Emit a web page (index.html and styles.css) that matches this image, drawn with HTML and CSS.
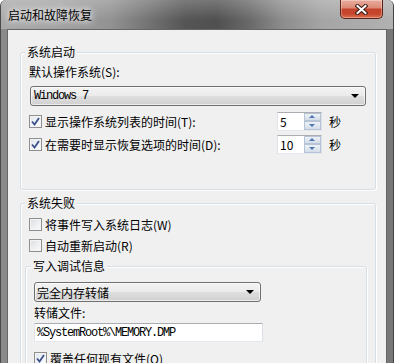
FILE: index.html
```html
<!DOCTYPE html>
<html lang="zh-CN">
<head>
    <meta charset="UTF-8">
    <meta name="viewport" content="width=device-width, initial-scale=1.0">
    <title>启动和故障恢复</title>
    <link rel="stylesheet" href="styles.css">
</head>
<body>
  <div class="window">
    <div class="titlebar">
      <span class="title">启动和故障恢复</span>
      <button class="close" aria-label="关闭">
        <svg width="13" height="11" viewBox="0 0 13 11">
          <path d="M2.5 2 L10.5 9 M10.5 2 L2.5 9" stroke="#3a1a12" stroke-width="4" stroke-linecap="square"/>
          <path d="M2.5 2 L10.5 9 M10.5 2 L2.5 9" stroke="#fff" stroke-width="2" stroke-linecap="square"/>
        </svg>
      </button>
    </div>

    <div class="client">
      <fieldset class="group startup">
        <legend>系统启动</legend>
        <div class="field-label">默认操作系统(S):</div>
        <div class="combo wide">
          <span class="mono">Windows 7</span>
          <span class="arrow"></span>
        </div>

        <div class="time-row first">
          <label class="check">
            <span class="box checked">
              <svg width="9" height="9" viewBox="0 0 9 9"><path d="M1 4.5 L3.5 7.5 L8 1" fill="none" stroke="#3c5089" stroke-width="1.8"/></svg>
            </span>
            显示操作系统列表的时间(T):
          </label>
          <div class="spin">
            <span class="spin-value">5</span>
            <span class="spin-btns"><span class="up"></span><span class="down"></span></span>
          </div>
          <span class="unit">秒</span>
        </div>

        <div class="time-row">
          <label class="check">
            <span class="box checked">
              <svg width="9" height="9" viewBox="0 0 9 9"><path d="M1 4.5 L3.5 7.5 L8 1" fill="none" stroke="#3c5089" stroke-width="1.8"/></svg>
            </span>
            在需要时显示恢复选项的时间(D):
          </label>
          <div class="spin">
            <span class="spin-value">10</span>
            <span class="spin-btns"><span class="up"></span><span class="down"></span></span>
          </div>
          <span class="unit">秒</span>
        </div>
      </fieldset>

      <fieldset class="group failure">
        <legend>系统失败</legend>
        <label class="check row">
          <span class="box"></span>
          将事件写入系统日志(W)
        </label>
        <label class="check row second">
          <span class="box"></span>
          自动重新启动(R)
        </label>

        <fieldset class="group debug">
          <legend>写入调试信息</legend>
          <div class="combo narrow">
            <span>完全内存转储</span>
            <span class="arrow"></span>
          </div>
          <div class="field-label dump-label">转储文件:</div>
          <div class="textbox"><span class="mono">%SystemRoot%\MEMORY.DMP</span></div>
          <label class="check row overwrite">
            <span class="box checked">
              <svg width="9" height="9" viewBox="0 0 9 9"><path d="M1 4.5 L3.5 7.5 L8 1" fill="none" stroke="#3c5089" stroke-width="1.8"/></svg>
            </span>
            覆盖任何现有文件(O)
          </label>
        </fieldset>
      </fieldset>
    </div>
  </div>
</body>
</html>
```

FILE: styles.css
```css
*{
    margin: 0;
    padding: 0;
    box-sizing: border-box;
}
body{
    width: 394px;
    height: 363px;
    overflow: hidden;
    font-family: "Noto Sans CJK SC", "Microsoft YaHei", sans-serif;
    font-size: 12px;
    color: #000;
}
.window{
    height: 363px;
    display: flex;
    flex-direction: column;
    background: linear-gradient(90deg, #8a8a8a, #7c7c7c 50%, #777 100%);
    border-left: 1px solid #4a4a4a;
    border-right: 1px solid #444;
    border-radius: 6px 6px 0 0;
    overflow: hidden;
}
.titlebar{
    height: 29px;
    flex-shrink: 0;
    display: flex;
    align-items: flex-start;
    justify-content: space-between;
    padding-left: 7px;
    background:
        linear-gradient(180deg, rgba(255,255,255,0.22), rgba(255,255,255,0) 70%),
        linear-gradient(90deg, #a9a9a9 0%, #a3a3a3 14%, #929292 28%, #727272 38%, #555 47%, #505050 55%, #686868 63%, #8d8d8d 72%, #a5a5a5 82%, #b1b1b1 100%);
}
.title{
    margin-top: 7px;
    line-height: 16px;
    text-shadow: 0 0 6px #fff, 0 0 10px rgba(255,255,255,0.8);
}
.close{
    width: 43px;
    height: 19px;
    margin-right: 10px;
    border: 1px solid #5c2418;
    border-top: none;
    border-radius: 0 0 5px 5px;
    background: linear-gradient(180deg, #e9ad9e 0%, #dc8b77 42%, #c4432b 52%, #c6472e 78%, #dc7450 100%);
    box-shadow: inset 0 0 0 1px rgba(255,255,255,0.3);
    display: flex;
    align-items: center;
    justify-content: center;
}
.client{
    flex: 1;
    margin: 0 6px 0 6px;
    border: 1px solid #666;
    border-bottom: none;
    background-color: #f0f0f0;
    padding: 15px 10px 0 12px;
}

/* group boxes */
.group{
    border: 1px solid #d5dfe5;
    border-radius: 3px;
    box-shadow: inset 1px 1px 0 #fff, 1px 1px 0 #fff;
}
.group legend{
    line-height: 14px;
    padding: 0 2px;
    background-color: #f0f0f0;
}
.startup{
    height: 145px;
    padding: 5px 9px 0 8px;
}
.startup > legend{
    margin-left: -4px;
}
.failure{
    margin-top: 6px;
    padding: 5px 8px 0 4px;
}
.failure > legend{
    margin-left: 0;
}
.debug{
    margin-top: 5px;
    padding: 9px 8px 0 8px;
}
.debug > legend{
    margin-left: -3px;
}

.field-label{
    line-height: 16px;
}
.dump-label{
    margin-top: 3px;
}
.mono{
    font-family: "Liberation Mono", monospace;
    font-size: 12px;
    letter-spacing: -1.2px;
}

/* combo boxes */
.combo{
    height: 20px;
    display: flex;
    align-items: center;
    justify-content: space-between;
    padding: 0 6px 0 3px;
    border: 1px solid #707070;
    border-radius: 3px;
    background: linear-gradient(180deg, #f3f3f3 0%, #ebebeb 48%, #dedede 52%, #d0d0d0 100%);
    box-shadow: inset 0 0 0 1px rgba(255,255,255,0.6);
}
.wide{
    margin-top: 6px;
    margin-left: 1px;
}
.narrow{
    width: 227px;
    padding-left: 2px;
}
.arrow{
    width: 0;
    height: 0;
    border-left: 4px solid transparent;
    border-right: 4px solid transparent;
    border-top: 4px solid #000;
}

/* checkboxes */
.check{
    display: flex;
    align-items: center;
    gap: 3px;
}
.row{
    height: 18px;
    margin-left: 4px;
}
.second{
    margin-top: 3px;
}
.overwrite{
    margin-left: 0;
    margin-top: 7px;
}
.box{
    width: 13px;
    height: 13px;
    flex-shrink: 0;
    display: flex;
    align-items: center;
    justify-content: center;
    border: 1px solid #8e8f8f;
    background: linear-gradient(135deg, #d9dbdf 0%, #eceef0 50%, #fbfbfb 100%);
    box-shadow: inset 0 0 0 1px #f4f4f4;
}
.box.checked{
    background: linear-gradient(135deg, #dfe6ef 0%, #eef2f7 50%, #fdfdfd 100%);
}

/* time rows with spin boxes */
.time-row{
    height: 20px;
    display: flex;
    align-items: center;
    margin-right: 25px;
    margin-top: 3px;
}
.time-row.first{
    margin-top: 5px;
}
.time-row .check{
    margin-right: auto;
}
.spin{
    height: 19px;
    display: flex;
    border: 1px solid;
    border-color: #abadb3 #dbdfe6 #e3e9ef #e2e3ea;
    background-color: #fff;
}
.spin-value{
    width: 26px;
    padding-left: 2px;
    line-height: 17px;
}
.spin-btns{
    width: 17px;
    display: flex;
    flex-direction: column;
}
.spin-btns span{
    flex: 1;
    display: flex;
    align-items: center;
    justify-content: center;
    border: 1px solid #b7c4d6;
    background: linear-gradient(180deg, #eef2f7, #d3dde9);
}
.spin-btns .up::after{
    content: "";
    border-left: 3px solid transparent;
    border-right: 3px solid transparent;
    border-bottom: 3px solid #4f78b0;
}
.spin-btns .down::after{
    content: "";
    border-left: 3px solid transparent;
    border-right: 3px solid transparent;
    border-top: 3px solid #4f78b0;
}
.unit{
    margin-left: 7px;
}

/* text box */
.textbox{
    width: 229px;
    height: 19px;
    margin-top: 2px;
    padding-left: 2px;
    display: flex;
    align-items: center;
    border: 1px solid;
    border-color: #abadb3 #dbdfe6 #e3e9ef #e2e3ea;
    background-color: #fff;
}
```
